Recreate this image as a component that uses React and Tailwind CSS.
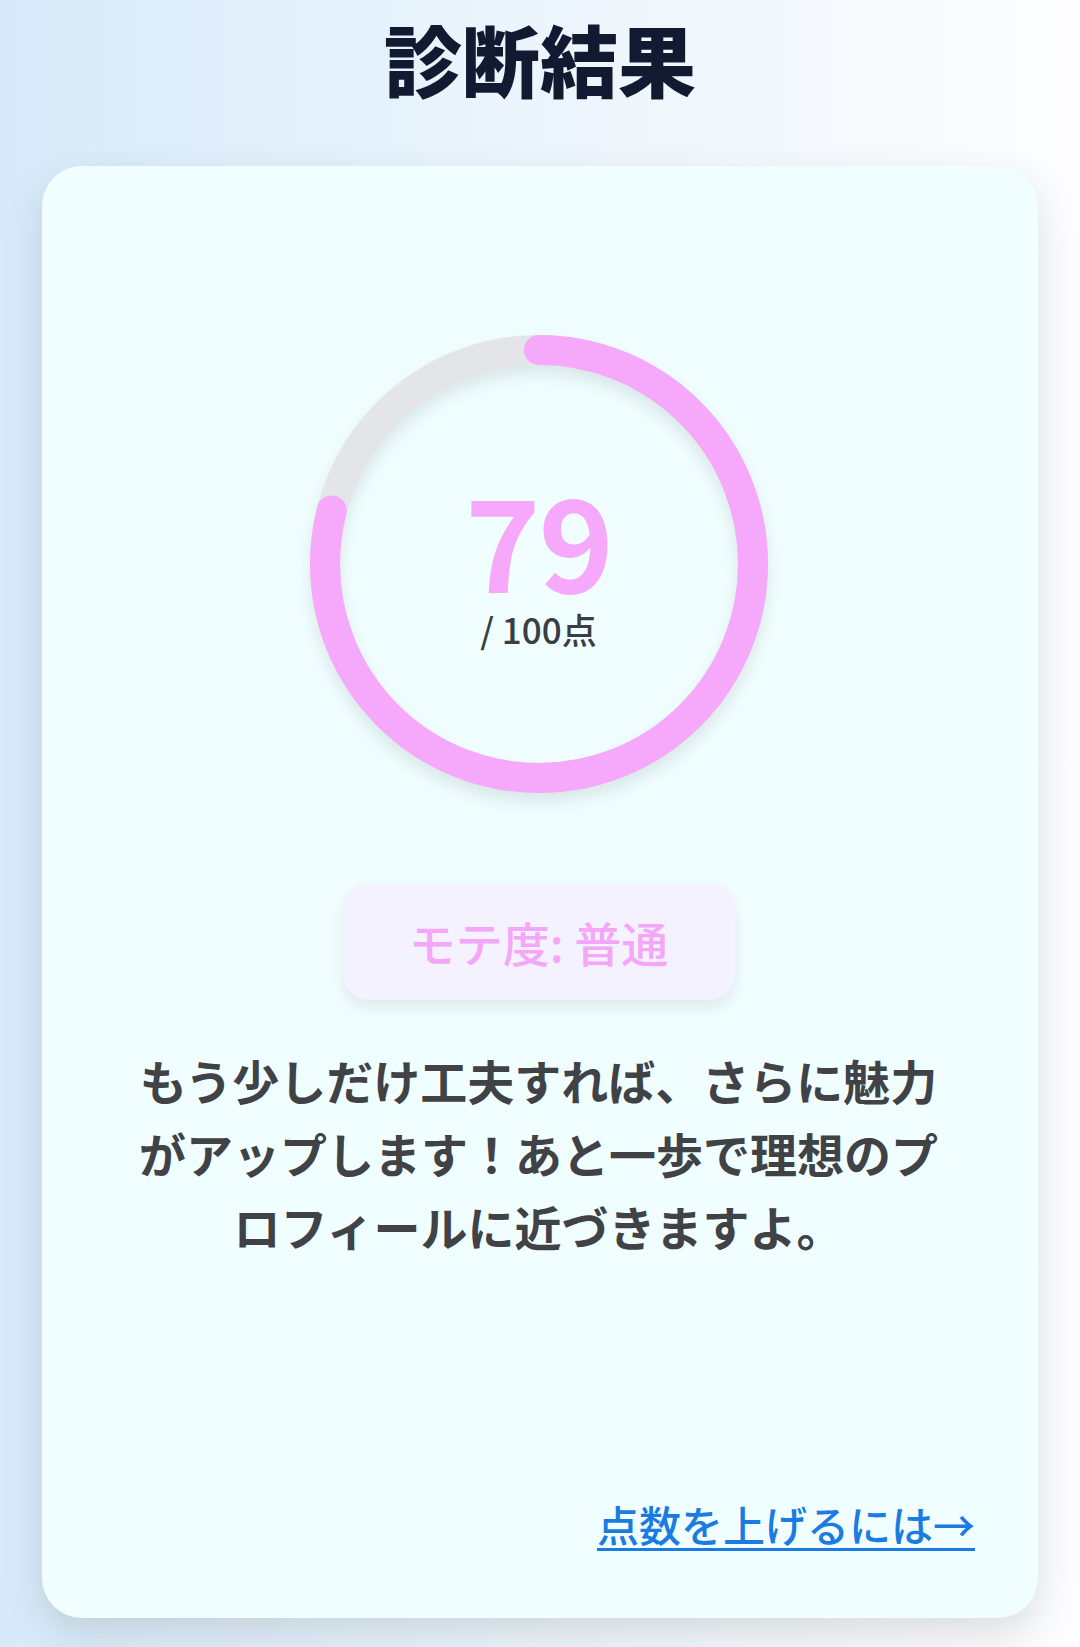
import React from "react";

const SCORE = 79;
const R = 214;
const C = 2 * Math.PI * R;

function ScoreRing({ score }) {
  const filled = (score / 100) * C;
  return (
    <div className="relative w-[460px] h-[460px]">
      <svg
        width="460"
        height="460"
        viewBox="0 0 460 460"
        className="absolute inset-0 drop-shadow-[0_9px_8px_rgba(0,0,0,0.09)]"
      >
        <circle cx="230" cy="230" r={R} fill="none" stroke="#e3e5e9" strokeWidth="30" />
        <circle
          cx="230"
          cy="230"
          r={R}
          fill="none"
          stroke="#f6a8fa"
          strokeWidth="30"
          strokeLinecap="round"
          strokeDasharray={`${filled} ${C}`}
          transform="rotate(-90 230 230)"
        />
      </svg>
      <div className="absolute inset-0 flex flex-col items-center justify-center pb-[8px]">
        <div className="text-[128px] leading-none font-bold text-[#f6a8fa] tracking-[-2px]">{score}</div>
        <div className="mt-[9px] text-[35px] leading-none font-medium text-[#3a3d42]">/ 100点</div>
      </div>
    </div>
  );
}

export default function App() {
  return (
    <div className="min-h-[1647px] w-full bg-linear-to-r from-[#d7eaf9] via-[#ecf5fc] to-[#fdfdfe] px-[42px] pt-[19px] font-['Noto_Sans_CJK_JP','Noto_Sans',sans-serif]">
      <h1 className="text-center text-[78px] leading-none font-black text-[#121a32]">診断結果</h1>

      <div className="mt-[69px] h-[1452px] rounded-[40px] bg-[#f0feff] shadow-[0_16px_40px_rgba(0,0,0,0.12)] flex flex-col items-center pt-[168px] pb-[63px] pr-[63px] pl-[60px]">
        <ScoreRing score={SCORE} />

        <div className="mt-[89px] w-[392px] h-[117px] rounded-[26px] bg-[#f3f2fe] shadow-[0_8px_16px_rgba(0,0,0,0.08)] flex items-center justify-center">
          <span className="text-[47px] leading-none font-medium text-[#f4a6f8]">モテ度: 普通</span>
        </div>

        <p className="mt-[43px] w-[820px] text-center text-[47px] leading-[73px] font-bold text-[#404246]">
          もう少しだけ工夫すれば、さらに魅力がアップします！あと一歩で理想のプロフィールに近づきますよ。
        </p>

        <div className="flex-1" />

        <a
          href="#"
          className="self-end text-[42px] leading-[63px] font-medium text-[#1b7be0] underline decoration-[3px] underline-offset-[6px]"
        >
          点数を上げるには→
        </a>
      </div>
    </div>
  );
}
